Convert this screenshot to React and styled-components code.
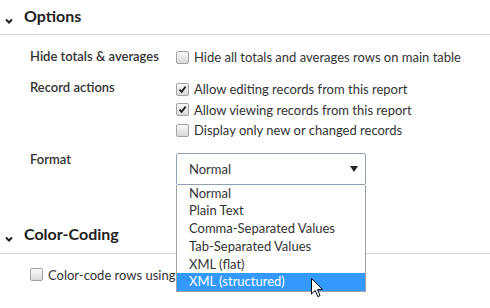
import React from 'react';
import styled, { createGlobalStyle } from 'styled-components';

const GlobalStyle = createGlobalStyle`
  body {
    margin: 0;
    background: #fff;
    font-family: Lato, "Liberation Sans", sans-serif;
    color: #333;
  }
`;

const Page = styled.div`
  width: 490px;
  height: 308px;
  overflow: hidden;
  position: relative;
`;

const Header = styled.div`
  display: flex;
  align-items: center;
  height: 35px;
  padding-bottom: 3px;
  box-sizing: border-box;
  border-bottom: 1px solid #cfcfcf;
`;

const Chevron = styled.svg`
  width: 16px;
  height: 20px;
  margin-left: 1px;
  margin-right: 7px;
`;

const Title = styled.div`
  font-size: 16px;
  font-weight: 700;
  color: #222;
  line-height: 20px;
`;

const Body = styled.div`
  padding: ${(p) => p.$pt || 12}px 0 0 30px;
`;

const FieldRow = styled.div`
  display: grid;
  grid-template-columns: 146px 1fr;
  align-items: start;
  margin-bottom: ${(p) => p.$mb ?? 12}px;
`;

const Label = styled.div`
  font-size: 13px;
  font-weight: 600;
  color: #333;
  line-height: ${(p) => p.$lh || 18}px;
`;

const Checks = styled.div`
  display: flex;
  flex-direction: column;
`;

const CheckRow = styled.label`
  display: flex;
  align-items: center;
  gap: 3px;
  height: ${(p) => p.$h || 20.5}px;
  font-size: 13px;
  color: #333;
`;

const Box = styled.span`
  width: 11px;
  height: 11px;
  border: 1px solid #a3a3a3;
  border-radius: 2px;
  background: linear-gradient(#fafafa, #d9d9d9);
  display: flex;
  align-items: center;
  justify-content: center;
  margin-right: 2px;
`;

const Check = ({ checked }) => (
  <Box>
    {checked && (
      <svg width="9" height="9" viewBox="0 0 9 9">
        <path d="M1.5 4.6 L3.6 6.8 L7.6 1.6" fill="none" stroke="#222" strokeWidth="1.8" />
      </svg>
    )}
  </Box>
);

const SelectWrap = styled.div`
  position: relative;
  width: 190px;
`;

const Select = styled.div`
  height: 32px;
  box-sizing: border-box;
  border: 1px solid #8fa2b5;
  border-radius: 2px;
  display: flex;
  align-items: center;
  justify-content: space-between;
  padding: 0 7px 0 12px;
  font-size: 13px;
  color: #333;
`;

const List = styled.ul`
  position: absolute;
  top: 32px;
  left: 0;
  width: 190px;
  box-sizing: border-box;
  margin: 0;
  padding: 0;
  list-style: none;
  background: #fff;
  border: 1px solid #a0a0a0;
  border-top: none;
  z-index: 2;
`;

const Item = styled.li`
  height: 17.8px;
  line-height: 17.8px;
  padding-left: 12px;
  font-size: 13px;
  color: ${(p) => (p.$active ? '#fff' : '#333')};
  background: ${(p) => (p.$active ? '#3399ff' : 'transparent')};
`;

const Cursor = styled.svg`
  position: absolute;
  left: 311px;
  top: 278px;
  z-index: 3;
`;

const options = [
  'Normal',
  'Plain Text',
  'Comma-Separated Values',
  'Tab-Separated Values',
  'XML (flat)',
  'XML (structured)',
];

const SectionHeader = ({ children }) => (
  <Header>
    <Chevron viewBox="0 0 16 20">
      <path d="M5 13.5 L8 16.5 L11 13.5" fill="none" stroke="#222" strokeWidth="2" />
    </Chevron>
    <Title>{children}</Title>
  </Header>
);

export default function App() {
  return (
    <Page>
      <GlobalStyle />
      <SectionHeader>Options</SectionHeader>
      <Body>
        <FieldRow>
          <Label $lh={19}>Hide totals &amp; averages</Label>
          <Checks>
            <CheckRow $h={20}>
              <Check />
              Hide all totals and averages rows on main table
            </CheckRow>
          </Checks>
        </FieldRow>
        <FieldRow>
          <Label $lh={16}>Record actions</Label>
          <Checks>
            <CheckRow>
              <Check checked />
              Allow editing records from this report
            </CheckRow>
            <CheckRow>
              <Check checked />
              Allow viewing records from this report
            </CheckRow>
            <CheckRow>
              <Check />
              Display only new or changed records
            </CheckRow>
          </Checks>
        </FieldRow>
        <FieldRow $mb={34}>
          <Label $lh={13}>Format</Label>
          <SelectWrap>
            <Select>
              Normal
              <svg width="8" height="6" viewBox="0 0 8 6">
                <path d="M0 0 L8 0 L4 6 Z" fill="#222" />
              </svg>
            </Select>
            <List>
              {options.map((o, i) => (
                <Item key={o} $active={i === options.length - 1}>
                  {o}
                </Item>
              ))}
            </List>
          </SelectWrap>
        </FieldRow>
      </Body>
      <SectionHeader>Color-Coding</SectionHeader>
      <Body $pt={11}>
        <CheckRow $h={20}>
          <Check />
          Color-code rows using a formula
        </CheckRow>
      </Body>
      <Cursor width="13" height="20" viewBox="0 0 13 20">
        <path
          d="M0.5 0.5 L0.5 16 L4.2 12.5 L6.8 18.6 L9 17.6 L6.5 11.6 L11.5 11.6 Z"
          fill="#fff"
          stroke="#000"
          strokeWidth="1"
          strokeLinejoin="round"
        />
      </Cursor>
    </Page>
  );
}
